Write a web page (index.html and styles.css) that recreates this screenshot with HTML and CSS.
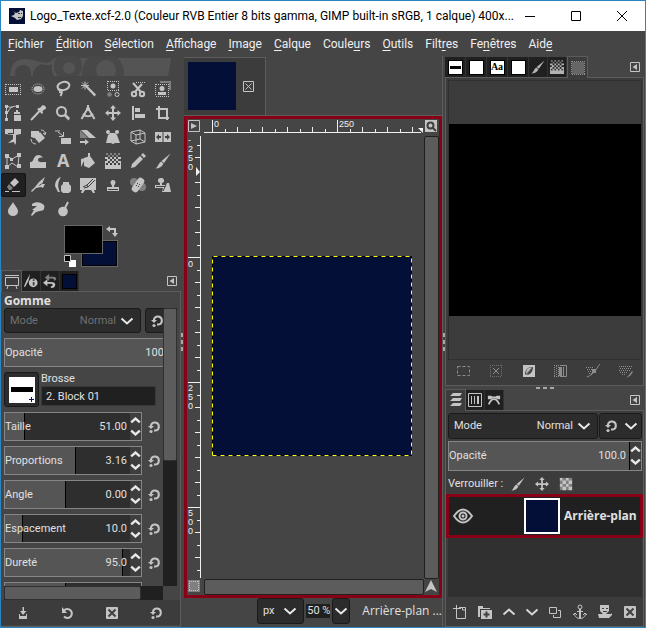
FILE: index.html
```html
<!DOCTYPE html>
<html lang="fr">
<head>
<meta charset="utf-8">
<title>Logo_Texte.xcf-2.0 – GIMP</title>
<link rel="stylesheet" href="styles.css">
</head>
<body>
<svg class="defs" aria-hidden="true">
  <symbol id="reset" viewBox="0 0 16 16"><path class="line2" d="M5 7V6.500A4 4 0 1 1 9.500 11.500H8"/><path d="M2 7h6L5 10z"/><circle cx="5" cy="12.500" r="1.600"/></symbol>
  <symbol id="chev" viewBox="0 0 14 8"><path class="line2" d="M1.500 1.500L7 6.500l5.500-5"/></symbol>
  <symbol id="brush" viewBox="0 0 16 16"><path d="M15.500 0.500L9 10 6.500 8zM6 8.500L8.500 10.500C7 14 4 15.500 0.500 15.500 3 14 3.500 10 6 8.500z"/></symbol>
  <symbol id="checks" viewBox="0 0 16 16"><path class="dim" d="M1 0h2v2h-2zM5 0h2v2h-2zM9 0h2v2h-2zM13 0h2v2h-2zM3 2h2v2h-2zM7 2h2v2h-2zM11 2h2v2h-2z"/><path d="M0 4h3v2h-3zM5 4h2v2h-2zM9 4h2v2h-2zM13 4h3v2h-3zM2 6h3v2h-3zM7 6h2v2h-2zM11 6h2v2h-2zM0 8h3v2h-3zM5 8h2v2h-2zM9 8h2v2h-2zM13 8h3v2h-3zM0 10h16v6H0z"/><path class="hole" d="M1 10h2v2h-2zM5 10h2v2h-2zM9 10h2v2h-2zM13 10h2v2h-2z"/></symbol>
  <symbol id="move" viewBox="0 0 16 16"><path d="M8 0l3 3.500H9V7h3.500V5L16 8l-3.500 3V9H9v3.500h2L8 16l-3-3.500h2V9H3.500v2L0 8l3.500-3v2H7V3.500H5z"/></symbol>
  <symbol id="tri" viewBox="0 0 10 10"><path class="line" d="M.5.5h9v9h-9z"/><path d="M7 2v6L2.500 5z"/></symbol>
  <symbol id="x" viewBox="0 0 16 16"><rect x="2" y="2" width="12" height="12" rx="1"/><path class="bgline" d="M4.500 4.500l7 7M11.500 4.500l-7 7"/></symbol>
</svg>

<div class="window">
  <header class="titlebar">
    <svg class="app-icon" viewBox="0 0 16 16"><path fill="#030f36" d="M0 0h16v16H0z"/><path d="M4 3l3 2 3-1 1-2 3 1v5l-2 3-4 1-2-2-2-1-2-1 3-1 1-2z"/><path fill="#333" d="M9 5h2v1H9zM12 5h1v1h-1zM9 9h3v1H9z"/></svg>
    <h1>Logo_Texte.xcf-2.0 (Couleur RVB Entier 8 bits gamma, GIMP built-in sRGB, 1 calque) 400x...</h1>
    <button aria-label="Réduire"><svg viewBox="0 0 10 10"><path d="M0 5.500h10"/></svg></button>
    <button aria-label="Agrandir"><svg viewBox="0 0 10 10"><path d="M.5.5h9v9h-9z"/></svg></button>
    <button aria-label="Fermer"><svg viewBox="0 0 10 10"><path d="M0 0l10 10M10 0L0 10"/></svg></button>
  </header>
  <nav class="menubar">
    <a href="#"><u>F</u>ichier</a><a href="#"><u>É</u>dition</a><a href="#"><u>S</u>élection</a><a href="#"><u>A</u>ffichage</a><a href="#"><u>I</u>mage</a><a href="#"><u>C</u>alque</a><a href="#">Coule<u>u</u>rs</a><a href="#"><u>O</u>utils</a><a href="#">Filt<u>r</u>es</a><a href="#">Fe<u>n</u>êtres</a><a href="#">Aid<u>e</u></a>
  </nav>

  <main class="workspace">
    <aside class="left">
      <svg class="wilber" viewBox="0 0 180 21"><path d="M9 20C10 8 14 3 24 3c12 0 17 6 25 3l5-4h116c-1 8-2 13-3 18z"/><g class="bg"><circle cx="22" cy="17" r="8"/><path d="M32 20c-1-5 4-10 8-12 4 1 8 2 11 0-1 5 0 9 2 12z"/></g><circle class="ring" cx="67" cy="10" r="14"/><circle class="ring" cx="102" cy="17" r="21"/><circle cx="68" cy="12" r="6"/><circle cx="105" cy="14" r="10"/><path class="bg" d="M0 20h180v20H0z"/></svg>
      <div class="tools">
        <button aria-label="Sélection rectangulaire"><svg viewBox="0 0 16 16"><path class="dots" d="M1 3.500h14.500M1 13.500h14.500M.5 3v11M15.500 3v11"/><path d="M4 6h9v5H4z"/></svg></button>
        <button aria-label="Sélection elliptique"><svg viewBox="0 0 16 16"><ellipse class="dots" cx="8" cy="8" rx="6" ry="5"/><ellipse cx="8" cy="8" rx="4.500" ry="3"/></svg></button>
        <button aria-label="Sélection à main levée"><svg viewBox="0 0 16 16"><ellipse class="line2" cx="8.500" cy="5" rx="6" ry="4" transform="rotate(-14 8.500 5)"/><path class="line2" d="M3 8c1 2 4 0 4 2s-2 1-3 1M6.500 10c1 2 0 3-1 5"/></svg></button>
        <button aria-label="Sélection contiguë"><svg viewBox="0 0 16 16"><path d="M5 5.500L7 4.500 16 13.500 14.500 15.500z"/><path class="line" d="M5 .5v8M1 4.500h8M2 1.500l6 6M8 1.500l-6 6"/></svg></button>
        <button aria-label="Sélection par couleur"><svg viewBox="0 0 16 16"><path class="dots" d="M3 .5h11M3 9.500h11M2.500 0v10M13.500 0v10"/><circle cx="8" cy="5" r="2.500"/><circle class="dim" cx="4.500" cy="13.500" r="2.300"/><circle class="line" cx="12" cy="13.500" r="2"/></svg></button>
        <button aria-label="Ciseaux intelligents"><svg viewBox="0 0 16 16"><path class="dots" d="M6 1.500h10"/><path class="line2" d="M3 2l8 9M12 3l-7 8"/><circle class="line2" cx="4" cy="13" r="2.200"/><circle class="line2" cx="12" cy="13" r="2.200"/></svg></button>
        <button aria-label="Extraction du premier plan"><svg viewBox="0 0 16 16"><path class="dim" d="M5 0h11v9h-2V2H5z"/><path class="dots" d="M1 3.500h12M1 15.500h13M.5 3v12M13.500 3v12"/><circle cx="7" cy="7.500" r="2.500"/><path d="M3 14v-3h8v3z"/></svg></button>

        <button aria-label="Chemins"><svg viewBox="0 0 16 16"><path d="M0 0h3v3H0zM0 6h3v3H0zM0 13h3v3H0zM11 0h3v3h-3zM11 5h2v2h2v2H9V7h2zM9 10h7v6H9z"/><path class="line" d="M1.500 2v12M3 1.500c3 2 5-1 9 0M3 7c1-3 3-5 5-5"/></svg></button>
        <button aria-label="Pipette"><svg viewBox="0 0 16 16"><path d="M9 3l1.500-.5L12 .5q2-1 3.500 1T14.500 4.500l-2 1.500.5 2-1 1-5-5z"/><path class="line2" d="M9.500 6L3 13l-2 2"/></svg></button>
        <button aria-label="Zoom"><svg viewBox="0 0 16 16"><circle class="line2" cx="6.500" cy="6.500" r="4.500"/><path d="M9 11l2-2 4 4-1.500 2.500z"/></svg></button>
        <button aria-label="Mesure"><svg viewBox="0 0 16 16"><path class="line2" d="M8 0v4M8 3L1.500 14M8 3l6.500 11"/><path class="line2" d="M3 9c3 3 7 3 10 0"/><circle cx="8" cy="4" r="2"/></svg></button>
        <button aria-label="Déplacement"><svg><use href="#move"/></svg></button>
        <button aria-label="Alignement"><svg viewBox="0 0 16 16"><path d="M2 1h2v14H2zM5 3h5v4H5zM5 9h10v4H5z"/></svg></button>
        <button aria-label="Découpage"><svg viewBox="0 0 16 16"><path d="M3 1h2v11h9v2H3zM1 3h12v12h-2V5H1z"/></svg></button>

        <button aria-label="Transformation unifiée"><svg viewBox="0 0 16 16"><path d="M0 0h16v5l-5 1v8l-1 2-1-3-6 1 5-4V6L0 5z"/><path class="bgline thin" d="M8.500 0v5M3 4.500h6"/></svg></button>
        <button aria-label="Rotation"><svg viewBox="0 0 16 16"><path d="M1 2h8v3L4 9 1 8zM10 3l5 6-6 5-5-6z"/><path class="line" d="M11 1c3 0 4 2 4 4M1 10c0 3 2 5 5 5M13 4l2 2 1-3"/></svg></button>
        <button aria-label="Mise à l'échelle"><svg viewBox="0 0 16 16"><path class="dim" d="M0 1h5v2H0z"/><path d="M6 9h10v6H6z"/><path class="line" d="M3 3l5 4M8.500 3v4.500H4"/></svg></button>
        <button aria-label="Cisaillement"><svg viewBox="0 0 16 16"><path class="dim" d="M0 1v8h8z"/><path d="M1 1h6l9 8h-7zM0 12h5v-2l4 3-4 3v-2H0z"/></svg></button>
        <button aria-label="Transformation par poignées"><svg viewBox="0 0 16 16"><circle cx="3" cy="3" r="2"/><circle cx="12" cy="3" r="2"/><path d="M5 4h5l2 2 3 8h-5l-2-3-2 3H1l2-8z"/><circle cx="8" cy="13" r="2"/></svg></button>
        <button aria-label="Transformation 3D"><svg viewBox="0 0 16 16"><path class="line" d="M1 3l9-2 5 3v9l-9 2-5-3zM1 3l5 3 9-2M6 6v9M10 1v9l5 3M1 12l9-2"/></svg></button>
        <button aria-label="Retournement"><svg viewBox="0 0 16 16"><path d="M0 3h7.500v10H0zM8.500 3H16v10H8.500z"/><path class="hole" d="M1 8l3-3v2h2v2H4v2zM15 8l-3-3v2h-2v2h2v2z"/></svg></button>

        <button aria-label="Transformation par cage"><svg viewBox="0 0 16 16"><path class="line" d="M2 3l5 3 7-4-1 12-6-4-5 4z"/><path d="M0 1h4v4H0zM5 5h3v3H5zM12 0h4v4h-4zM0 12h4v4H0zM12 11h4v4h-4z"/></svg></button>
        <button aria-label="Déformation"><svg viewBox="0 0 16 16"><path d="M0 15V9c3 0 3-2 4-4 2-4 7-4 9 0-3-1-5 0-5 2 0 3 5 2 8 2v6z"/></svg></button>
        <button aria-label="Texte"><svg viewBox="0 0 16 16"><text x="2" y="14">A</text></svg></button>
        <button aria-label="Remplissage"><svg viewBox="0 0 16 16"><path d="M4 5l6-2 5 7-6 5-5-2zM1 6l4-1-1 3-2 4-1 2z"/><path class="line2" d="M9 0v7"/></svg></button>
        <button aria-label="Dégradé"><svg><use href="#checks"/></svg></button>
        <button aria-label="Crayon"><svg viewBox="0 0 16 16"><path d="M13 0l3 3-2 2-3-3zM10 3l3 3-8 8-4 1 1-4z"/></svg></button>
        <button aria-label="Pinceau"><svg><use href="#brush"/></svg></button>

        <button class="active" aria-label="Gomme"><svg viewBox="0 0 16 16"><path d="M10 1l4 4-5 5-4-4z"/><path class="dim" d="M4 7l4 4-2 2H4L2 10z"/><path d="M0 14h4v1H0zM7 14h8v1H7z"/></svg></button>
        <button aria-label="Aérographe"><svg viewBox="0 0 16 16"><path d="M15 0l-3 7 3 0-2 4-2-1-5 1-4 4-1-1 4-4 4-5z"/><path class="hole" d="M8 9l4-3-1 2z"/></svg></button>
        <button aria-label="Calligraphie"><svg viewBox="0 0 16 16"><path d="M3 0v15h2C2 9 3 5 6 0 2 1 0 5 0 9l3 6zM8 5h6v2l2 2v5l-2 2H8l-2-2V9l2-2z"/></svg></button>
        <button aria-label="Brosse MyPaint"><svg viewBox="0 0 16 16"><path d="M0 1h16v12H0z"/><path d="M2 13h3l-2 3H1zM11 13h3l1 3h-2z"/><path class="bgline thin" d="M13 2L7 8M15 3L8 10M3 10l4-2 1 2-4 1"/></svg></button>
        <button aria-label="Clonage"><svg viewBox="0 0 16 16"><path d="M8 3a2.500 2.500 0 0 1 2 4l-1 2v1h5v4H2v-4h5V9L6 7a2.500 2.500 0 0 1 2-4z"/><path class="hole" d="M3 12h10v1H3z"/></svg></button>
        <button aria-label="Correcteur"><svg viewBox="0 0 16 16"><circle class="dim" cx="4" cy="5" r="4"/><circle class="dim" cx="12" cy="10" r="4"/><rect x="4.500" y="0" width="7" height="16" rx="3" transform="rotate(35 8 8)"/><path class="hole" d="M7 6h1v1H7zM9 7h1v1H9zM6 8h1v1H6zM8 9h1v1H8z"/></svg></button>
        <button aria-label="Clonage en perspective"><svg viewBox="0 0 16 16"><path d="M6 1a2.500 2.500 0 0 1 1 5v2h4l1-2h2l2 9H7l1-4H0V8h5V6a2.500 2.500 0 0 1 1-5z"/><path class="bgline thin" d="M1 9.500h9M8 14l3-6"/></svg></button>

        <button aria-label="Flou"><svg viewBox="0 0 16 16"><path d="M8 1c2 4 5 6 5 9.500a5 4.500 0 0 1-10 0C3 7 6 5 8 1z"/></svg></button>
        <button aria-label="Barbouillage"><svg viewBox="0 0 16 16"><path d="M2 3c4-3 9-2 12 1 1 3 0 6-4 6l-4 1-4 4-1-1 3-5H2l5-4H2z"/></svg></button>
        <button aria-label="Éclaircir"><svg viewBox="0 0 16 16"><circle cx="8" cy="10.500" r="4.800"/><path class="line2" d="M10 7l3-6"/></svg></button>
      </div>

      <div class="colors">
        <button class="swatch back" aria-label="Arrière-plan"></button>
        <button class="swatch fore" aria-label="Premier plan"></button>
        <svg class="swap" viewBox="0 0 12 12"><path d="M4 0v2h6v5h2l-3 4-3-4h2V4H4v2L0 3z"/></svg>
        <svg class="default" viewBox="0 0 12 12"><path fill="#fff" d="M5 5h7v7H5z"/><path fill="#000" stroke="#c4c4c4" d="M.5.5h6v6h-6z"/></svg>
      </div>

      <div class="tabs">
        <button class="tab on" aria-label="Options"><svg viewBox="0 0 14 14"><path class="line" d="M.5 2.500h13v8H.5zM0 .5h14M3 11l-1 3M11 11l1 3"/></svg></button>
        <button class="tab" aria-label="Périphérique"><svg viewBox="0 0 16 16"><path d="M7 0L5 8l-4 7-1-1 3-7z"/><circle cx="10.500" cy="10" r="5"/><path class="hole" d="M10 6h2v2h-2zM10 9h2v4h-2z"/></svg></button>
        <button class="tab" aria-label="Historique"><svg viewBox="0 0 16 16"><path class="dim" d="M2 4l5-4v3h5q3 0 3 3l-2 2q0-3-2-3H7v3z"/><path d="M0 10l5-4v3h4q5 0 5 3 0 4-5 4v-2q2 0 2-1.500T9 11H5v3z"/></svg></button>
        <button class="tab" aria-label="Images"><span class="chip"></span></button>
        <button class="tab-menu" aria-label="Configurer"><svg><use href="#tri"/></svg></button>
      </div>
      <section class="panel options">
        <h2>Gomme</h2>
        <div class="scroll-grid">
          <div class="clip">
            <div class="option-list">
              <div class="row"><div class="combo disabled"><label for="m1">Mode</label><select id="m1" disabled><option>Normal</option></select><svg><use href="#chev"/></svg></div><button class="dark" aria-label="Réinitialiser le mode"><svg class="ic"><use href="#reset"/></svg></button></div>
              <div class="spin full wide"><label for="o1">Opacité</label><input id="o1" value="100.0"></div>
              <div class="brush-row">
                <button class="dark brush-button" aria-label="Choisir une brosse"><svg viewBox="0 0 26 26"><path fill="#fff" d="M0 0h26v26H0z"/><path fill="#000" d="M2 10h22v5H2z"/><path stroke="#001060" d="M20 22.500h5M22.500 20v5"/></svg></button>
                <div class="brush-name"><label for="b1">Brosse</label><input id="b1" value="2. Block 01"></div>
              </div>
              <div class="row"><div class="spin" style="--fill:15%"><label for="s1">Taille</label><input id="s1" value="51.00"><span class="steps"><button aria-label="Plus"><svg><use href="#chev"/></svg></button><button aria-label="Moins"><svg><use href="#chev"/></svg></button></span></div><button class="bare" aria-label="Réinitialiser"><svg class="ic"><use href="#reset"/></svg></button></div>
              <div class="row"><div class="spin" style="--fill:52%"><label for="s2">Proportions</label><input id="s2" value="3.16"><span class="steps"><button aria-label="Plus"><svg><use href="#chev"/></svg></button><button aria-label="Moins"><svg><use href="#chev"/></svg></button></span></div><button class="bare" aria-label="Réinitialiser"><svg class="ic"><use href="#reset"/></svg></button></div>
              <div class="row"><div class="spin" style="--fill:45%"><label for="s3">Angle</label><input id="s3" value="0.00"><span class="steps"><button aria-label="Plus"><svg><use href="#chev"/></svg></button><button aria-label="Moins"><svg><use href="#chev"/></svg></button></span></div><button class="bare" aria-label="Réinitialiser"><svg class="ic"><use href="#reset"/></svg></button></div>
              <div class="row"><div class="spin" style="--fill:13%"><label for="s4">Espacement</label><input id="s4" value="10.0"><span class="steps"><button aria-label="Plus"><svg><use href="#chev"/></svg></button><button aria-label="Moins"><svg><use href="#chev"/></svg></button></span></div><button class="bare" aria-label="Réinitialiser"><svg class="ic"><use href="#reset"/></svg></button></div>
              <div class="row"><div class="spin" style="--fill:87%"><label for="s5">Dureté</label><input id="s5" value="95.0"><span class="steps"><button aria-label="Plus"><svg><use href="#chev"/></svg></button><button aria-label="Moins"><svg><use href="#chev"/></svg></button></span></div><button class="bare" aria-label="Réinitialiser"><svg class="ic"><use href="#reset"/></svg></button></div>
              <div class="row"><div class="spin" style="--fill:45%"></div></div>
            </div>
          </div>
          <div class="vtrack"><div class="thumb"></div></div>
          <div class="htrack"><div class="thumb"></div></div>
        </div>
        <div class="actions">
          <button aria-label="Enregistrer"><svg class="ic" viewBox="0 0 16 16"><path d="M7.500 2h1.500v4h2.500L8 10 5 6h2.500zM4 9h1v2h6V9h1v5H4z"/></svg></button>
          <button aria-label="Restaurer"><svg class="ic" viewBox="0 0 16 16"><path class="line2" d="M5 5.500A4.500 4.500 0 1 1 5 11.500"/><path d="M3 2v6h5z"/></svg></button>
          <button aria-label="Supprimer"><svg class="ic"><use href="#x"/></svg></button>
          <button aria-label="Réinitialiser"><svg class="ic"><use href="#reset"/></svg></button>
        </div>
      </section>
    </aside>

    <div class="handle"><i></i><i></i><i></i></div>

    <section class="center">
      <div class="image-tabs">
        <button class="image-tab" aria-label="Logo_Texte.xcf"><span class="thumbnail"></span><svg viewBox="0 0 11 11"><path class="line" d="M.5.5h10v10H.5zM2.500 2.500l6 6M8.500 2.500l-6 6"/></svg></button>
      </div>
      <div class="image-view">
        <button class="corner" aria-label="Menu de l'image"><svg viewBox="0 0 12 12"><path class="line2 thin" d="M.5.5h11v11H.5z"/><path d="M3 3v6l6-3z"/></svg></button>
        <svg class="ruler-h"><path class="line" d="M0 13.500h217M8.500 1v12M21.500 10v3M33.500 8v5M46.500 10v3M58.500 8v5M71.500 10v3M83.500 8v5M96.500 10v3M108.500 8v5M121.500 10v3M133.500 1v12M146.500 10v3M158.500 8v5M171.500 10v3M183.500 8v5M196.500 10v3M208.500 8v5"/><path d="M214 9h5v5z"/><text x="10" y="8">0</text><text x="135" y="8">250</text></svg>
        <button class="corner" aria-label="Zoom automatique"><svg viewBox="0 0 12 12"><path d="M0 0h12v12H0z"/><circle class="bgline" cx="5.500" cy="5.500" r="3"/><path class="bgline" d="M8 8l3 3"/></svg></button>
        <svg class="ruler-v"><path class="line" d="M13.500 0v442M10 9.500h3M8 21.500h5M8 46.500h5M10 59.500h3M8 71.500h5M10 84.500h3M8 96.500h5M10 109.500h3M1 121.500h12M10 134.500h3M8 146.500h5M10 159.500h3M8 171.500h5M10 184.500h3M8 196.500h5M10 209.500h3M8 221.500h5M10 234.500h3M1 246.500h12M10 259.500h3M8 271.500h5M10 284.500h3M8 296.500h5M10 309.500h3M8 321.500h5M10 334.500h3M8 346.500h5M10 359.500h3M1 371.500h12M10 384.500h3M8 396.500h5M10 409.500h3M8 421.500h5M10 434.500h3"/><path d="M9 31v9l4-4z"/><text x="1" y="7">-</text><text x="1" y="16">2</text><text x="1" y="25">5</text><text x="1" y="34">0</text><text x="1" y="131">0</text><text x="1" y="255">2</text><text x="1" y="264">5</text><text x="1" y="273">0</text><text x="1" y="380">5</text><text x="1" y="389">0</text><text x="1" y="398">0</text></svg>
        <div class="canvas"><svg class="image" viewBox="0 0 200 200"><path fill="#030f36" d="M0 0h200v200H0z"/><path class="edge" d="M.5.5h199v199H.5z"/><path class="marching" d="M.5 199.500V.5H199.500V199.500H.5"/></svg></div>
        <div class="bar"></div>
        <button class="corner" aria-label="Masque rapide"><svg viewBox="0 0 12 12"><path class="dim" d="M0 0h12v12H0z"/><path class="dots" d="M1 1.500h10M1 10.500h10M1.500 1v10M10.500 1v10"/></svg></button>
        <div class="bar"></div>
        <button class="corner" aria-label="Navigation"><svg viewBox="0 0 12 12"><path d="M6 0l6 12-6-3-6 3z"/></svg></button>
      </div>
      <footer class="status">
        <div class="combo unit"><select aria-label="Unité"><option>px</option></select><svg><use href="#chev"/></svg></div>
        <div class="zoom"><input aria-label="Zoom" value="50 %"></div>
        <button class="dark zoom-open" aria-label="Niveaux de zoom"><svg><use href="#chev"/></svg></button>
        <span>Arrière-plan ...</span>
      </footer>
    </section>

    <div class="handle"><i></i><i></i><i></i></div>

    <aside class="right">
      <div class="dock dock-top">
        <div class="tabs">
          <button class="tab" aria-label="Brosses"><span class="chip white stroke"></span></button>
          <button class="tab" aria-label="Motifs"><span class="chip white"></span></button>
          <button class="tab" aria-label="Polices"><span class="chip white font">Aa</span></button>
          <button class="tab" aria-label="Dégradés"><span class="chip white"></span></button>
          <button class="tab" aria-label="Dynamiques"><svg class="soft"><use href="#brush"/></svg></button>
          <button class="tab" aria-label="Palettes"><svg class="soft"><use href="#checks"/></svg></button>
          <button class="tab on" aria-label="Éditeur de sélection"><svg viewBox="0 0 14 14"><path fill="#666" d="M1 1h12v12H1z"/><path class="dots dimline" d="M1 .5h13M1 13.500h13M.5 0v14M13.500 0v14"/></svg></button>
          <button class="tab-menu" aria-label="Configurer"><svg><use href="#tri"/></svg></button>
        </div>
        <section class="panel">
          <div class="preview"><div></div></div>
          <div class="actions">
            <button aria-label="Tout"><svg class="ic" viewBox="0 0 16 16"><path class="line dash" d="M1.500 3.500h12v9h-12z"/></svg></button>
            <button aria-label="Aucune"><svg class="ic" viewBox="0 0 16 16"><path class="dots dimline" d="M2 2.500h12M2 13.500h12M2.500 2v12M13.500 2v12"/><path class="line" d="M5 5l6 6M11 5l-6 6"/></svg></button>
            <button class="strong" aria-label="Inverser"><svg class="ic" viewBox="0 0 16 16"><path d="M2 2h12v12H2z"/><path class="hole" d="M4 12c0-5 2-8 8-8L4 12zM12 4c0 5-3 8-7 8z" /><path d="M11 4.500c-4 0-6 2-6 6z"/></svg></button>
            <button aria-label="Vers canal"><svg class="ic" viewBox="0 0 16 16"><path class="dots" d="M1 2.500h8M1 13.500h8M1.500 2v12M3.500 3v10M5.500 4v9"/><path d="M6 4h3v9H6zM10 4h1v9h-1z"/><path class="line" d="M8 2.500h5.500v11H8"/></svg></button>
            <button aria-label="Vers chemin"><svg class="ic" viewBox="0 0 16 16"><path class="dots" d="M1 4.500h8M2 6.500h7M3 8.500h5M4 10.500h3"/><path class="line" d="M15 1c-3 3-5 10-13 13"/><path d="M7 6h4v4H7z"/></svg></button>
            <button aria-label="Tracer"><svg class="ic" viewBox="0 0 16 16"><path class="dots" d="M1 3.500h13M2 5.500h12M1 7.500h11M2 9.500h8M4 11.500h4"/><path d="M14 8l1 1-3 4-4 2 3-3z"/></svg></button>
          </div>
        </section>
      </div>
      <div class="split"><i></i><i></i><i></i></div>
      <div class="dock dock-bottom">
        <div class="tabs">
          <button class="tab on" aria-label="Calques"><svg viewBox="0 0 14 14"><path d="M4 0h9l-2 3H1zM4 5h9l-2 3H1zM4 10h9l-2 3H1z"/></svg></button>
          <button class="tab" aria-label="Canaux"><svg viewBox="0 0 14 14"><path class="line" d="M.5.5h13v13H.5zM3.500 3v8M6.500 3v8M9.500 3v8"/><path d="M10 3h1v8h-1z"/></svg></button>
          <button class="tab" aria-label="Chemins"><svg viewBox="0 0 16 16"><path d="M1 3h4l1 1h4l1-1h4v4h-3L10 6H6L5 7H1z"/><path class="line2" d="M2 13c2-5 4-6 6-6s4 1 6 6"/></svg></button>
          <button class="tab-menu" aria-label="Configurer"><svg><use href="#tri"/></svg></button>
        </div>
        <section class="panel layers">
          <div class="row"><div class="combo"><label for="m2">Mode</label><select id="m2"><option>Normal</option></select><svg><use href="#chev"/></svg></div><button class="dark mode-switch" aria-label="Groupe de modes"><svg class="ic"><use href="#reset"/></svg><svg class="chev"><use href="#chev"/></svg></button></div>
          <div class="spin full"><label for="o2">Opacité</label><input id="o2" value="100.0"><span class="steps edged"><button aria-label="Plus"><svg><use href="#chev"/></svg></button><button aria-label="Moins"><svg><use href="#chev"/></svg></button></span></div>
          <div class="locks"><span>Verrouiller :</span><button aria-label="Pixels"><svg><use href="#brush"/></svg></button><button aria-label="Position"><svg><use href="#move"/></svg></button><button aria-label="Alpha"><svg viewBox="0 0 16 16"><path class="dim" d="M1 1h14v14H1z"/><path d="M1 1h3v3H1zM8 1h3v3H8zM4 4h4v4H4zM11 4h4v4h-4zM1 8h3v3H1zM8 8h3v3H8zM4 11h4v4H4zM11 11h4v4h-4z"/></svg></button></div>
          <div class="layer-list">
            <div class="layer"><svg class="eye" viewBox="0 0 20 16"><path class="line2" d="M1 8q9-13 18 0-9 13-18 0z"/><circle class="line2" cx="10" cy="8" r="3.500"/><circle cx="10" cy="8" r="1.500"/></svg><span class="layer-thumb"></span><strong>Arrière-plan</strong></div>
          </div>
          <div class="actions">
            <button aria-label="Nouveau calque"><svg class="ic" viewBox="0 0 16 16"><path class="line" d="M7 3.500h6.500v11h-9V9M4.500 1v8M1 4.500h8M10.500 3v3h3"/></svg></button>
            <button aria-label="Nouveau groupe"><svg class="ic" viewBox="0 0 16 16"><path d="M1 2h5v2h7v1H3v8H1zM4 6h11v9H4z"/><path class="bgline" d="M9.500 7.500v6M6.500 10.500h6"/></svg></button>
            <button aria-label="Monter"><svg class="chev up soft"><use href="#chev"/></svg></button>
            <button aria-label="Descendre"><svg class="chev soft"><use href="#chev"/></svg></button>
            <button aria-label="Dupliquer"><svg class="ic" viewBox="0 0 16 16"><path class="line" d="M2.500 3.500h7v6h-7zM11 6.500h2.500v7h-7V11"/></svg></button>
            <button aria-label="Ancrer"><svg class="ic" viewBox="0 0 16 16"><circle class="line" cx="8" cy="3" r="2"/><path class="line2" d="M8 5v9"/><path class="line" d="M5 7.500h6M2.500 9c0 4 3 5.500 5.500 5.500s5.500-1.500 5.500-5.500M1 11l2-2 2 2M15 11l-2-2-2 2"/></svg></button>
            <button aria-label="Ajouter un masque"><svg class="ic" viewBox="0 0 16 16"><path d="M3 1h9v6l-3 3H6L3 7zM1 10h13l1-1v2l-3 3H2z"/><path class="hole" d="M5 4h2v1H5zM9 4h2v1H9zM6 7h4v1H6z"/></svg></button>
            <button aria-label="Supprimer"><svg class="ic"><use href="#x"/></svg></button>
          </div>
        </section>
      </div>
    </aside>
  </main>
</div>
</body>
</html>
```
FILE: styles.css
```css
* { box-sizing: border-box; }
:root {
  --bg: #454545;
  --panel: #3c3c3c;
  --dark: #202020;
  --line: #5c5c5c;
  --icon: #c4c4c4;
  --navy: #030f36;
  --red: #880016;
}
body {
  margin: 0;
  font: 11px/14px Roboto, "Open Sans", sans-serif;
  color: #e0e0e0;
}
button, input, select {
  font: inherit;
  color: inherit;
  background: none;
  border: 0;
  padding: 0;
  margin: 0;
  min-width: 0;
  appearance: none;
}
h1, h2 { margin: 0; }
svg { display: block; fill: var(--icon); overflow: visible; }
.defs { position: absolute; width: 0; height: 0; }
.line { fill: none; stroke: var(--icon); stroke-width: 1; }
.line2 { fill: none; stroke: var(--ink, var(--icon)); stroke-width: var(--weight, 2); }
.bgline { fill: none; stroke: #404040; stroke-width: 2; }
.thin { stroke-width: 1; }
.dots { fill: none; stroke: var(--icon); stroke-width: 1; stroke-dasharray: 1 1; }
.dash { stroke-dasharray: 3 2; }
.dim { fill: #808080; }
.dimline { stroke: #909090; }
.hole { fill: #404040; }
.ic { width: 16px; height: 16px; }

.window {
  display: flex;
  flex-direction: column;
  height: 100vh;
  min-height: 600px;
  background: var(--bg);
  border: 1px solid #2b85c0;
}
.titlebar {
  display: flex;
  align-items: center;
  flex: 0 0 30px;
  padding-left: 8px;
  background: #fff;
  color: #000;
}
.app-icon { width: 16px; height: 16px; margin-right: 5px; flex: none; }
.titlebar h1 { flex: 1; min-width: 0; font-size: 12px; font-weight: 400; white-space: nowrap; }
.titlebar button { flex: 0 0 46px; height: 30px; display: grid; place-items: center; }
.titlebar button svg { width: 10px; height: 10px; fill: none; stroke: #000; }
.menubar {
  display: flex;
  flex: 0 0 25px;
  align-items: center;
  gap: 12px;
  padding-left: 7px;
  font-size: 12px;
}
.menubar a { color: #f0f0f0; text-decoration: none; }
.menubar u { text-underline-offset: 2px; }

.workspace {
  flex: 1;
  min-height: 0;
  display: grid;
  grid-template-columns: 180px 3px minmax(0, 1fr) 2px 199px;
  padding-right: 1px;
}
.handle { display: flex; flex-direction: column; justify-content: center; gap: 3px; }
.handle i { width: 2px; height: 4px; background: #a8a8a8; }

.left { display: flex; flex-direction: column; min-height: 0; }
.wilber { height: 21px; fill: #545454; overflow: hidden; }
.wilber .bg { fill: var(--bg); }
.wilber .ring { fill: #484848; }
.tools { display: grid; grid-template-columns: repeat(7, 25px); grid-auto-rows: 24px; }
.tools button { display: grid; align-items: center; border-radius: 3px; padding-left: 4px; }
.tools svg { width: 16px; height: 16px; }
.tools .active { background: var(--dark); box-shadow: inset 0 0 0 1px #141414; }
.tools text { font: bold 18px/18px "Open Sans", sans-serif; }

.colors { position: relative; flex: 0 0 49px; }
.swatch { position: absolute; border: 1px solid #666; outline: 1px solid #000; outline-offset: -2px; }
.fore { left: 63px; top: 4px; width: 39px; height: 29px; background: #000; }
.back { left: 80px; top: 19px; width: 37px; height: 27px; background: var(--navy); }
.swap { position: absolute; left: 105px; top: 5px; width: 12px; height: 12px; }
.default { position: absolute; left: 63px; top: 34px; width: 12px; height: 12px; }

.tabs { display: flex; flex: 0 0 22px; align-items: flex-end; margin-bottom: -1px; }
.tab { width: 19px; height: 20px; display: grid; place-items: center; background: var(--dark); margin-bottom: 1px; border-right: 1px solid #333; }
.tab.on { width: 21px; height: 22px; margin-bottom: 0; background: var(--panel); border: 1px solid var(--line); border-bottom: 0; position: relative; }
.tab svg { width: 14px; height: 14px; }
.chip { width: 15px; height: 15px; background: var(--navy); border: 1px solid #000; }
.chip.white { background: #fff; }
.chip.stroke { background: linear-gradient(#000, #000) center / 11px 3px no-repeat #fff; }
.chip.font { color: #000; font: bold 10px/12px "Liberation Serif", serif; }
.soft { opacity: .9; }
.tab-menu { margin: 0 4px 6px auto; }
.tab-menu svg { width: 10px; height: 10px; }

.panel {
  flex: 1;
  min-height: 0;
  display: flex;
  flex-direction: column;
  background: var(--panel);
  border: 1px solid var(--line);
}
.options { padding: 2px 3px 1px; border-left: 0; background: var(--bg); }
.options h2 { font: bold 12px/14px "Open Sans", sans-serif; }
.scroll-grid { flex: 1; min-height: 0; display: grid; grid-template: minmax(0, 1fr) 14px / minmax(0, 1fr) 14px; }
.clip { overflow: hidden; }
.option-list { width: 173px; display: flex; flex-direction: column; gap: 5px; }
.vtrack, .htrack { background: var(--dark); }
.thumb { background: #5c5c5c; border: 1px solid #303030; border-radius: 2px; }
.vtrack .thumb { height: 55%; }
.htrack .thumb { width: 86%; height: 14px; }
.row { display: flex; gap: 4px; }
.combo {
  flex: 1;
  display: flex;
  align-items: center;
  height: 26px;
  background: #2c2c2c;
  border: 1px solid #1a1a1a;
  border-radius: 3px;
  padding: 0 6px 0 5px;
}
.combo select { flex: 1; text-align-last: right; padding-right: 4px; opacity: 1; }
.combo svg, .zoom-open svg, .chev { width: 14px; height: 8px; --ink: #e8e8e8; }
.combo.disabled label, .combo.disabled select { color: #707070; }
.option-list .combo { flex: 0 0 137px; height: 25px; }
.dark {
  background: #2c2c2c;
  border: 1px solid #1a1a1a;
  border-radius: 3px;
  display: flex;
  align-items: center;
  justify-content: center;
}
.option-list .row > .dark { flex: 0 0 24px; }
.dark .ic { flex: none; }
.bare { width: 16px; display: grid; place-items: center; }
.spin {
  flex: 0 0 138px;
  height: 29px;
  display: flex;
  align-items: center;
  border: 1px solid #868686;
  background: linear-gradient(90deg, #555 calc(var(--fill) - 1px), #000 0, #000 var(--fill), #2e2e2e 0);
}
.spin.full { flex: none; background: #555; }
.spin label { flex: none; }
.spin input { flex: 1; width: 0; text-align: right; padding-right: 3px; }
.steps { flex: 0 0 11px; height: 100%; display: flex; flex-direction: column; justify-content: space-evenly; background: #3e3e3e; }
.edged { flex-basis: 12px; border-left: 1px solid #000; }
.steps svg { width: 11px; height: 7px; --weight: 3; --ink: #e8e8e8; }
.steps button:first-child svg, .up { transform: rotate(180deg); }
.brush-row { display: flex; gap: 2px; height: 35px; }
.brush-button { flex: 0 0 35px; }
.brush-button svg { width: 26px; height: 26px; }
.brush-name { width: 115px; display: flex; flex-direction: column; }
.brush-name input { height: 20px; background: var(--dark); border: 1px solid #3a3a3a; padding-left: 4px; }
.actions { flex: 0 0 25px; display: flex; align-items: center; justify-content: space-around; }
.actions button { display: grid; place-items: center; }
.options .actions { padding-right: 2px; margin: 0 -3px; background: var(--panel); }

.center { display: flex; flex-direction: column; min-height: 0; border-right: 1px solid var(--line); }
.image-tabs { flex: 0 0 59px; padding-top: 1px; border-bottom: 1px solid var(--line); }
.image-tab { width: 82px; height: 58px; display: flex; align-items: center; gap: 7px; padding-left: 4px; padding-bottom: 1px; background: var(--panel); border: 1px solid var(--line); border-width: 1px 1px 0 0; }
.thumbnail { width: 48px; height: 48px; background: var(--navy); }
.image-tab svg { width: 11px; height: 11px; }
.image-view {
  flex: 1;
  min-height: 0;
  display: grid;
  grid-template: 17px minmax(0, 1fr) 16px / 17px minmax(0, 1fr) 15px;
  border: 3px solid var(--red);
}
.corner { display: grid; place-items: center start; align-self: start; height: 14px; padding-left: 1px; }
.corner svg { width: 12px; height: 12px; }
.ruler-h { width: 100%; height: 14px; fill: #f0f0f0; }
.ruler-v { width: 14px; height: 100%; fill: #f0f0f0; }
.image-view text { font: 9px/9px "Liberation Sans", sans-serif; }
.ruler-h .line, .ruler-v .line { stroke: #f0f0f0; }
.canvas { display: grid; place-items: center; overflow: hidden; padding: 0 4px 4px 0; }
.image { width: 200px; height: 200px; }
.edge { fill: none; stroke: #000; }
.marching { fill: none; stroke: #ff0; stroke-dasharray: 4 4; }
.bar { background: #5c5c5c; border: 1px solid #202020; border-radius: 2px; }
.status { flex: 0 0 29px; display: flex; align-items: flex-start; padding-left: 73px; white-space: nowrap; }
.unit { flex: 0 0 47px; }
.unit select { text-align-last: left; padding: 0; }
.zoom { width: 26px; height: 26px; margin: 0 2px; display: grid; align-items: center; }
.zoom input { width: 100%; height: 14px; background: var(--dark); text-align: right; }
.zoom-open { flex: 0 0 18px; height: 26px; }
.zoom-open svg { flex: none; }
.status > span { padding: 6px 0 0 12px; font: 12px/14px "Open Sans", sans-serif; }

.right { display: flex; flex-direction: column; min-height: 0; }
.dock { display: flex; flex-direction: column; min-height: 0; }
.dock-top { flex: 329 1 0; }
.dock-bottom { flex: 238 1 0; }
.dock-top .tab { width: 21px; }
.dock-top .tab:nth-child(n+5) { width: 19px; }
.dock-top .tab.on { width: 21px; }
.split { flex: 0 0 3px; display: flex; justify-content: center; align-items: end; gap: 3px; }
.split i { width: 4px; height: 2px; background: #a8a8a8; }
.dock .panel { padding: 2px 1px 2px 2px; }
.preview { flex: 1; min-height: 0; display: grid; align-items: center; border: 1px solid #303030; }
.preview div { aspect-ratio: 1; background: #000; }
.dock-top .actions { flex-basis: 23px; }
.dock-top .actions button { opacity: .6; }
.dock-top .actions .strong { opacity: 1; }
.dock .layers { gap: 2px; padding-bottom: 2px; }
.mode-switch { flex: 0 0 43px; gap: 5px; }
.mode-switch svg { flex: none; }
.layers .row { gap: 1px; }
.layers .spin { height: 30px; }
.locks { flex: 0 0 22px; display: flex; align-items: center; gap: 10px; }
.locks span { margin-right: -2px; }
.locks svg { width: 14px; height: 14px; }
.layer-list { flex: 1; min-height: 0; background: #303030; margin-top: -3px; }
.layer { display: flex; align-items: center; height: 44px; margin: 0 -1px 0 -2px; background: var(--dark); border: 3px solid var(--red); padding-left: 4px; }
.eye { width: 20px; height: 16px; }
.layer-thumb { width: 36px; height: 36px; margin: 0 4px 0 51px; background: var(--navy); border: 2px solid #fff; }
.layer strong { font: bold 12px/14px "Open Sans", sans-serif; }
```
